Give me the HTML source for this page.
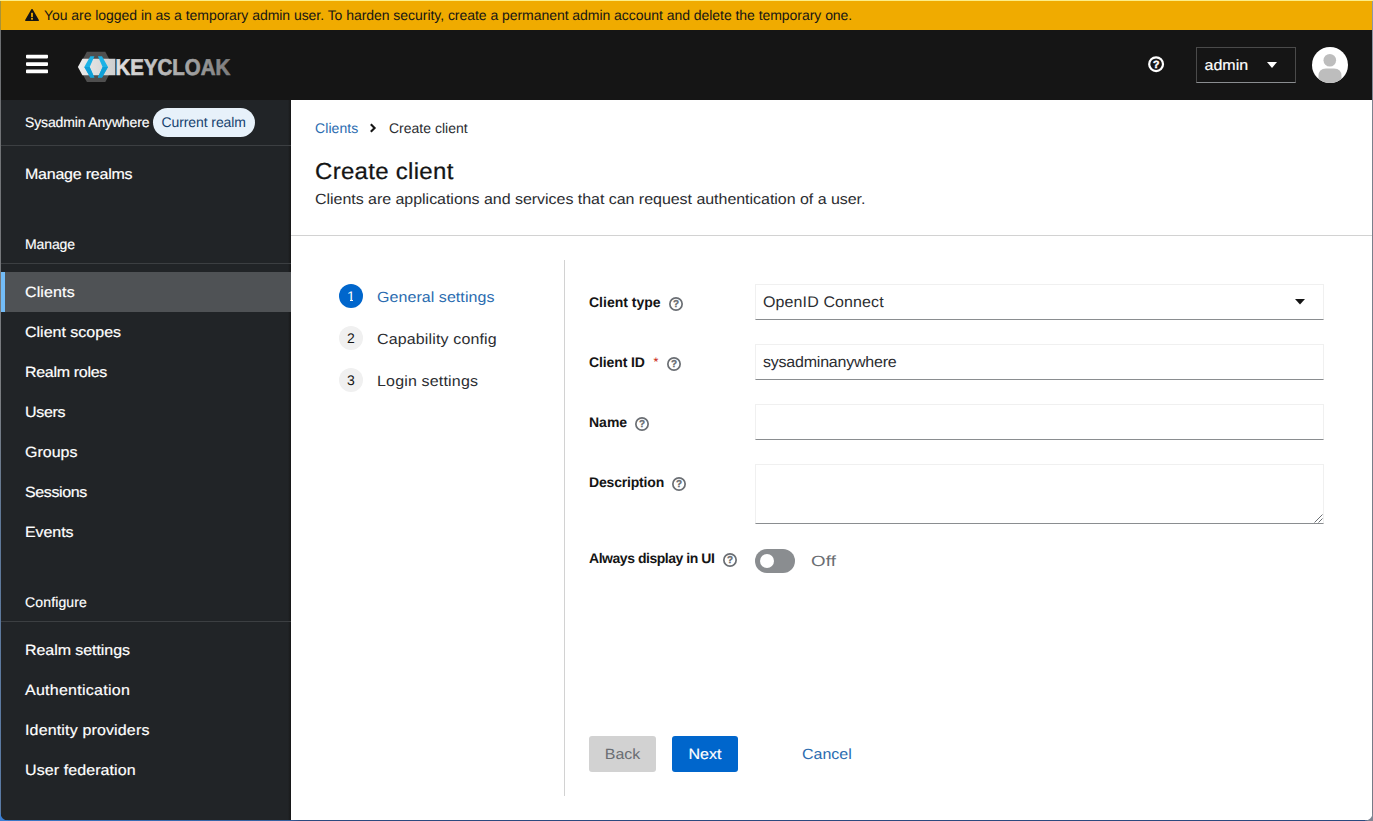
<!DOCTYPE html>
<html lang="en">
<head>
<meta charset="utf-8">
<title>Keycloak Administration Console</title>
<style>
*{box-sizing:border-box;margin:0;padding:0}
html,body{width:1373px;height:821px;overflow:hidden}
body{position:relative;background:#fff;text-rendering:geometricPrecision;font-family:"Liberation Sans",sans-serif;color:#151515;font-size:16px}
.abs{position:absolute}
.t{position:absolute;white-space:nowrap;line-height:1}
#adm{-webkit-text-stroke:.2px #fff}
.nav,.step,#sub,#f0,#f1,#off,#adm,#cn{transform:translateY(.5px) scaleY(.925);transform-origin:0 84.7%}
/* banner */
#banner{left:0;top:0;width:1373px;height:30px;background:#f0ab00}
#banner-top{left:0;top:0;width:1373px;height:1px;background:#fdee86}
/* header */
#masthead{left:0;top:30px;width:1373px;height:70px;background:#151515}
/* sidebar */
#sidebar{left:0;top:100px;width:291px;height:721px;background:#212427}
#sidebar-edge{left:288px;top:100px;width:3px;height:721px;background:linear-gradient(90deg,rgba(21,21,21,0),rgba(21,21,21,.9))}
.sdiv{position:absolute;left:0;width:291px;height:1px;background:#3c3f42}
.nav{color:#fff;font-size:16px;left:25px;-webkit-text-stroke:.2px #fff}
.navs{color:#fff;font-size:14px;left:25px;-webkit-text-stroke:.15px #fff}
#active{left:0;top:272px;width:291px;height:40px;background:#4f5255}
#active-bar{left:0;top:272px;width:5px;height:40px;background:#73bcf7}
/* window frame */
#frame-l{left:0;top:1px;width:1px;height:820px;background:linear-gradient(180deg,#a89238 0,#a89238 29px,#6c6e71 29px,#7a7d81 400px,#5f7898 520px,#5a7aa5 819px)}
#frame-r{left:1372px;top:1px;width:1px;height:820px;background:linear-gradient(180deg,#8f99aa 0,#7b808c 120px,#767a86 820px)}
#frame-b{left:0;top:820px;width:1373px;height:1px;background:linear-gradient(90deg,#3a78c8 0,#35609f 290px,#2b4a80 300px,#2b4a80 100%)}
/* main */
.hdiv{position:absolute;height:1px;background:#d2d2d2}
.lbl{font-weight:bold;font-size:14px;left:589px;color:#151515}
.field{position:absolute;left:755px;width:569px;height:36px;background:#fff;border:1px solid #f0f0f0;border-bottom:1px solid #8a8d90}
.stepc{position:absolute;left:339px;width:24px;height:24px;border-radius:50%;background:#f0f0f0;color:#151515;font-size:14px;text-align:center;line-height:24px}
.step{font-size:16px;left:377px;color:#151515}
.btn{position:absolute;top:736px;height:36px;border-radius:3px;font-size:16px;text-align:center;line-height:36px;white-space:nowrap}
/* per-text letter spacing */
#bt{letter-spacing:-0.044px}
#s0{letter-spacing:-0.15px}
#s1{letter-spacing:-0.09px}
#n0{letter-spacing:-0.225px}
#n1{letter-spacing:-0.1px}
#n2{letter-spacing:0.13px}
#n4{letter-spacing:-0.31px}
#n5{letter-spacing:-0.325px}
#n7{letter-spacing:-0.37px}
#n8{letter-spacing:-0.08px}
#n9{letter-spacing:0.15px}
#n10{letter-spacing:-0.06px}
#n11{letter-spacing:0.26px}
#n12{letter-spacing:0.15px}
#n13{letter-spacing:0.09px}
#b0{letter-spacing:0.08px}
#h1{letter-spacing:0.3px}
#sub{letter-spacing:-0.035px}
#w0{letter-spacing:0.06px}
#w1{letter-spacing:0.14px}
#w2{letter-spacing:0.17px}
#l1{letter-spacing:-0.11px}
#l3{letter-spacing:-0.18px}
#l4{letter-spacing:-0.46px}
#f0{letter-spacing:0.115px}
#f1{letter-spacing:-0.22px}
#off{letter-spacing:.1px;transform:translateY(.5px) scale(1.17,.925)}
#h1{transform:scaleY(.965);transform-origin:0 84.7%;-webkit-text-stroke:.25px #151515}
#b1,#sub,#w1,#w2,#f0,#f1{color:#2b2d31}
#f0,#f1{transform:translateY(.5px) scaleY(.96)}
.btn span{display:inline-block;line-height:1;transform:translateY(.5px) scaleY(.925);transform-origin:0 84.7%}
#nx span{-webkit-text-stroke:.2px #fff}
</style>
</head>
<body>
<!-- banner -->
<div id="banner" class="abs"></div>
<div id="banner-top" class="abs"></div>
<svg class="abs" style="left:24px;top:8px" width="16" height="14" viewBox="0 0 16 14"><path d="M8 1.7 L14.2 12.3 H1.8 Z" fill="#151515" stroke="#151515" stroke-width="1.5" stroke-linejoin="round"/><rect x="7.1" y="4.8" width="1.8" height="4.4" fill="#f0ab00"/><rect x="7.1" y="10" width="1.8" height="1.7" fill="#f0ab00"/></svg>
<div class="t" id="bt" style="left:44px;top:8px;font-size:14px;color:#151515">You are logged in as a temporary admin user. To harden security, create a permanent admin account and delete the temporary one.</div>

<!-- masthead -->
<div id="masthead" class="abs"></div>
<svg class="abs" style="left:26px;top:54px" width="22" height="20" viewBox="0 0 22 20"><rect x="0" y="0.7" width="22" height="3.7" rx="0.8" fill="#fff"/><rect x="0" y="8.2" width="22" height="3.7" rx="0.8" fill="#fff"/><rect x="0" y="15.6" width="22" height="3.7" rx="0.8" fill="#fff"/></svg>
<!-- logo -->
<svg class="abs" id="logo" style="left:76px;top:48px" width="160" height="38" viewBox="0 0 160 38">
<defs><linearGradient id="lg" gradientUnits="userSpaceOnUse" x1="40" x2="154" y1="0" y2="0"><stop offset="0" stop-color="#e2e2e2"/><stop offset="1" stop-color="#7d7d7d"/></linearGradient>
<linearGradient id="bg" gradientUnits="userSpaceOnUse" x1="2" x2="39" y1="0" y2="0"><stop offset="0" stop-color="#ececec"/><stop offset="1" stop-color="#cfcfcf"/></linearGradient></defs>
<polygon points="10.9,3.7 29.3,3.7 37.3,18.8 29.3,33.9 10.9,33.9 2.6,18.8" fill="#4f4f4f"/>
<polygon points="6.4,10.8 39.4,10.8 39.4,27.2 6.4,27.2 1.9,18.9" fill="url(#bg)"/>
<polygon points="8.3,18.9 14.3,8.3 18.4,8.3 13.7,18.9 18.4,29.4 14.3,29.4" fill="#1cb2e6"/><polygon points="8.3,18.9 13.7,18.9 18.4,29.4 14.3,29.4" fill="#0fa0d8"/>
<polygon points="32,18.9 26,8.3 21.9,8.3 26.6,18.9 21.9,29.4 26,29.4" fill="#1cb2e6"/><polygon points="32,18.9 26.6,18.9 21.9,29.4 26,29.4" fill="#0fa0d8"/>
<text x="39.6" y="27.2" font-family="Liberation Sans, sans-serif" font-weight="bold" font-size="22.9" fill="url(#lg)" stroke="url(#lg)" stroke-width="0.7" textLength="114.6" lengthAdjust="spacingAndGlyphs">KEYCLOAK</text>
</svg>
<!-- help -->
<svg class="abs" style="left:1147px;top:55px" width="18" height="18" viewBox="0 0 18 18"><circle cx="9.1" cy="9.2" r="6.9" fill="none" stroke="#fff" stroke-width="2.2"/><text x="9.1" y="13" text-anchor="middle" font-family="Liberation Sans, sans-serif" font-weight="bold" font-size="10.5" fill="#fff" stroke="#fff" stroke-width=".5">?</text></svg>
<!-- user dropdown -->
<div class="abs" style="left:1196px;top:47px;width:100px;height:36px;border:1px solid #4a4a4a;border-bottom-color:#8a8d90"></div>
<div class="t" id="adm" style="left:1204.5px;top:57px;font-size:16px;color:#fff">admin</div>
<svg class="abs" style="left:1266px;top:61px" width="12" height="8" viewBox="0 0 12 8"><path d="M1 1 H11 L6 7 Z" fill="#fff"/></svg>
<!-- avatar -->
<svg class="abs" style="left:1312px;top:47.2px" width="36" height="36" viewBox="0 0 36 36"><defs><clipPath id="ac"><circle cx="18" cy="18" r="18"/></clipPath></defs><circle cx="18" cy="18" r="18" fill="#fff"/><g clip-path="url(#ac)" fill="#bdbdbd"><circle cx="17.8" cy="13.2" r="6.3"/><path d="M6.5 36 V29 Q6.5 21.5 14 21.5 H22 Q29.5 21.5 29.5 29 V36 Z"/></g></svg>

<!-- sidebar -->
<div id="sidebar" class="abs"></div>
<div id="sidebar-edge" class="abs"></div>
<div class="t navs" id="s0" style="top:115px">Sysadmin Anywhere</div>
<div class="abs" style="left:153px;top:108px;width:102px;height:29px;border-radius:15px;background:#e7f1fa"></div>
<div class="t" id="s1" style="left:161.5px;top:115px;font-size:14px;color:#16426f">Current realm</div>
<div class="sdiv" style="top:145px"></div>
<div class="t nav" id="n0" style="top:166px">Manage realms</div>
<div class="t navs" id="n1" style="top:237px">Manage</div>
<div class="sdiv" style="top:263px"></div>
<div id="active" class="abs"></div><div id="active-bar" class="abs"></div>
<div class="t nav" id="n2" style="top:284px">Clients</div>
<div class="t nav" id="n3" style="top:324px">Client scopes</div>
<div class="t nav" id="n4" style="top:364px">Realm roles</div>
<div class="t nav" id="n5" style="top:404px">Users</div>
<div class="t nav" id="n6" style="top:444px">Groups</div>
<div class="t nav" id="n7" style="top:484px">Sessions</div>
<div class="t nav" id="n8" style="top:524px">Events</div>
<div class="t navs" id="n9" style="top:595px">Configure</div>
<div class="sdiv" style="top:621px"></div>
<div class="t nav" id="n10" style="top:642px">Realm settings</div>
<div class="t nav" id="n11" style="top:682px">Authentication</div>
<div class="t nav" id="n12" style="top:722px">Identity providers</div>
<div class="t nav" id="n13" style="top:762px">User federation</div>

<!-- main -->
<div class="t" id="b0" style="left:315px;top:121px;font-size:14px;color:#2b6cb0">Clients</div>
<svg class="abs" style="left:369px;top:123px" width="8" height="10" viewBox="0 0 8 10"><polyline points="1.8,1.2 5.6,5 1.8,8.8" fill="none" stroke="#151515" stroke-width="2.1"/></svg>
<div class="t" id="b1" style="left:389px;top:121px;font-size:14px">Create client</div>
<div class="t" id="h1" style="left:315px;top:160px;font-size:24px;color:#151515">Create client</div>
<div class="t" id="sub" style="left:315px;top:191px;font-size:16px">Clients are applications and services that can request authentication of a user.</div>
<div class="hdiv" style="left:291px;top:235px;width:1081px"></div>

<!-- wizard nav -->
<div class="stepc" style="top:284px;background:#0066cc;color:#fff">1<i class="abs" style="left:7px;top:16px;width:3.8px;height:1.4px;background:#0066cc"></i><i class="abs" style="left:13.7px;top:16px;width:3px;height:1.4px;background:#0066cc"></i></div>
<div class="t step" id="w0" style="top:289px;color:#2b6cb0">General settings</div>
<div class="stepc" style="top:326px">2</div>
<div class="t step" id="w1" style="top:331px">Capability config</div>
<div class="stepc" style="top:368px">3</div>
<div class="t step" id="w2" style="top:373px">Login settings</div>
<div class="abs" style="left:564px;top:260px;width:1px;height:536px;background:#d2d2d2"></div>

<!-- form -->
<div class="t lbl" id="l0" style="top:295px">Client type</div>
<div class="t lbl" id="l1" style="top:355px">Client ID</div>
<div class="t" id="l1s" style="left:653.5px;top:356px;font-size:12.5px;color:#c9190b">*</div>
<div class="t lbl" id="l2" style="top:415px">Name</div>
<div class="t lbl" id="l3" style="top:475px">Description</div>
<div class="t lbl" id="l4" style="top:551px">Always display in UI</div>

<svg class="abs" style="left:668px;top:296px" width="16" height="16" viewBox="0 0 16 16"><circle cx="8" cy="8" r="6.15" fill="none" stroke="#6a6e73" stroke-width="1.7"/><text x="8" y="11.3" text-anchor="middle" font-family="Liberation Sans, sans-serif" font-weight="bold" font-size="10" fill="#6a6e73" stroke="#6a6e73" stroke-width=".3">?</text></svg>
<svg class="abs" style="left:666.2px;top:356px" width="16" height="16" viewBox="0 0 16 16"><circle cx="8" cy="8" r="6.15" fill="none" stroke="#6a6e73" stroke-width="1.7"/><text x="8" y="11.3" text-anchor="middle" font-family="Liberation Sans, sans-serif" font-weight="bold" font-size="10" fill="#6a6e73" stroke="#6a6e73" stroke-width=".3">?</text></svg>
<svg class="abs" style="left:633.9px;top:416px" width="16" height="16" viewBox="0 0 16 16"><circle cx="8" cy="8" r="6.15" fill="none" stroke="#6a6e73" stroke-width="1.7"/><text x="8" y="11.3" text-anchor="middle" font-family="Liberation Sans, sans-serif" font-weight="bold" font-size="10" fill="#6a6e73" stroke="#6a6e73" stroke-width=".3">?</text></svg>
<svg class="abs" style="left:670.8px;top:476px" width="16" height="16" viewBox="0 0 16 16"><circle cx="8" cy="8" r="6.15" fill="none" stroke="#6a6e73" stroke-width="1.7"/><text x="8" y="11.3" text-anchor="middle" font-family="Liberation Sans, sans-serif" font-weight="bold" font-size="10" fill="#6a6e73" stroke="#6a6e73" stroke-width=".3">?</text></svg>
<svg class="abs" style="left:722.3px;top:552px" width="16" height="16" viewBox="0 0 16 16"><circle cx="8" cy="8" r="6.15" fill="none" stroke="#6a6e73" stroke-width="1.7"/><text x="8" y="11.3" text-anchor="middle" font-family="Liberation Sans, sans-serif" font-weight="bold" font-size="10" fill="#6a6e73" stroke="#6a6e73" stroke-width=".3">?</text></svg>
<div class="field" style="top:284px"></div>
<div class="t" id="f0" style="left:763px;top:294px;font-size:16px">OpenID Connect</div>
<svg class="abs" style="left:1294px;top:298px" width="12" height="8" viewBox="0 0 12 8"><path d="M1 1 H11 L6 6.6 Z" fill="#151515"/></svg>
<div class="field" style="top:344px"></div>
<div class="t" id="f1" style="left:763px;top:354px;font-size:16px">sysadminanywhere</div>
<div class="field" style="top:404px"></div>
<div class="field" style="top:464px;height:60px"></div>
<svg class="abs" style="left:1314px;top:514px" width="9" height="9" viewBox="0 0 9 9"><path d="M0.5 8.5 L8.5 0.5 M4.5 8.5 L8.5 4.5" stroke="#6a6e73" stroke-width="1"/></svg>

<!-- switch -->
<div class="abs" style="left:755px;top:549px;width:40px;height:24px;border-radius:12px;background:#8a8d90"></div>
<div class="abs" style="left:760px;top:554px;width:14px;height:14px;border-radius:50%;background:#fff"></div>
<div class="t" id="off" style="left:811px;top:553px;font-size:16px;color:#6a6e73">Off</div>

<!-- buttons -->
<div class="btn" id="bk" style="left:589px;width:67px;background:#d2d2d2;color:#6a6e73"><span>Back</span></div>
<div class="btn" id="nx" style="left:672px;width:66px;background:#0066cc;color:#fff"><span>Next</span></div>
<div class="t" id="cn" style="left:802px;top:746px;font-size:16px;color:#2b6cb0">Cancel</div>

<!-- frame -->
<div id="frame-l" class="abs"></div>
<div id="frame-r" class="abs"></div>
<div id="frame-b" class="abs"></div>
<div class="abs" style="left:0;top:813px;width:8px;height:8px;background:radial-gradient(circle at 100% 0,rgba(58,127,213,0) 7px,#3a7fd5 8px)"></div>
<div class="abs" style="left:1365px;top:813px;width:8px;height:8px;background:radial-gradient(circle at 0 0,rgba(125,133,148,0) 7px,#7d8594 8px)"></div>
</body>
</html>
